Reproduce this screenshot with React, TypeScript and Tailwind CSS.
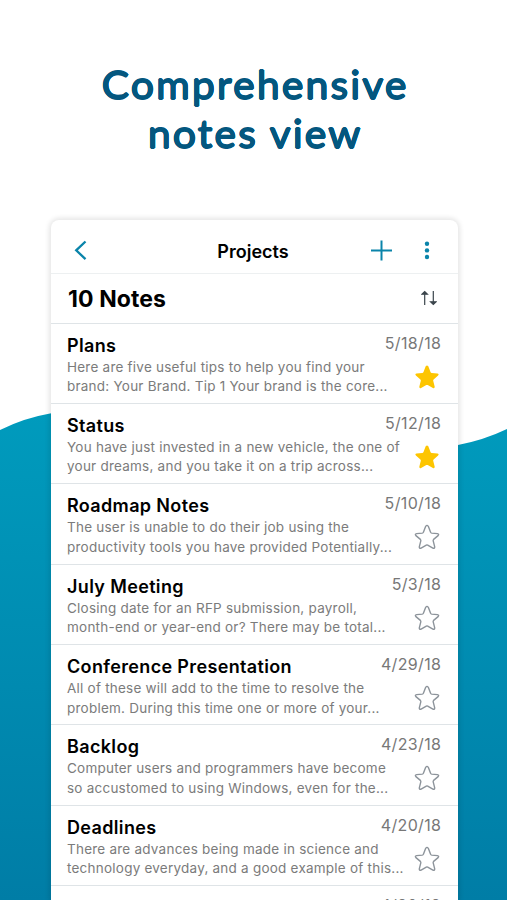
import React from "react";

const notes = [
  {
    title: "Plans",
    date: "5/18/18",
    lines: ["Here are five useful tips to help you find your", "brand: Your Brand. Tip 1 Your brand is the core..."],
    starred: true,
  },
  {
    title: "Status",
    date: "5/12/18",
    lines: ["You have just invested in a new vehicle, the one of", "your dreams, and you take it on a trip across..."],
    starred: true,
  },
  {
    title: "Roadmap Notes",
    date: "5/10/18",
    lines: ["The user is unable to do their job using the", "productivity tools you have provided Potentially..."],
    starred: false,
  },
  {
    title: "July Meeting",
    date: "5/3/18",
    lines: ["Closing date for an RFP submission, payroll,", "month-end or year-end or? There may be total..."],
    starred: false,
  },
  {
    title: "Conference Presentation",
    date: "4/29/18",
    lines: ["All of these will add to the time to resolve the", "problem. During this time one or more of your..."],
    starred: false,
  },
  {
    title: "Backlog",
    date: "4/23/18",
    lines: ["Computer users and programmers have become", "so accustomed to using Windows, even for the..."],
    starred: false,
  },
  {
    title: "Deadlines",
    date: "4/20/18",
    lines: ["There are advances being made in science and", "technology everyday, and a good example of this..."],
    starred: false,
  },
];

const Star = ({ filled }: { filled: boolean }) => (
  <svg width="26" height="26" viewBox="0 0 26 26" className="block">
    <path
      d="M11.7 2.3Q13 .5 14.3 2.3L16.6 8.3Q16.9 9 17.7 9.1L23.4 9.6Q25.4 10 24.1 11.6L19.6 15.4Q19 16 19.2 16.8L20.7 22.8Q20.8 24.8 18.9 24.1L13.7 21.1Q13 20.7 12.3 21.1L7.1 24.1Q5.2 24.8 5.3 22.8L6.8 16.8Q7 16 6.4 15.4L1.9 11.6Q.6 10 2.6 9.6L8.3 9.1Q9.1 9 9.4 8.3Z"
      fill={filled ? "#fdc500" : "none"}
      stroke={filled ? "none" : "#8d949b"}
      strokeWidth="1.4"
      strokeLinejoin="round"
    />
  </svg>
);

const Waves = () => (
  <svg className="absolute inset-0" width="507" height="900" viewBox="0 0 507 900">
    <defs>
      <linearGradient id="sea" x1="0" y1="410" x2="0" y2="900" gradientUnits="userSpaceOnUse">
        <stop offset="0" stopColor="#009bbd" />
        <stop offset="1" stopColor="#007da6" />
      </linearGradient>
    </defs>
    <path d="M0 430Q24 418 50 413.5C190 385 320 465 458 445Q484 440 507 429V900H0Z" fill="url(#sea)" />
  </svg>
);

const App = () => {
  return (
    <div className="relative h-[900px] w-[507px] overflow-hidden bg-white font-['Inter',sans-serif]">
      <Waves />
      <main className="relative flex flex-col items-center">
        {/* the shadows thicken the regular weight and round its stroke ends */}
        <h1 className="ml-[2px] flex h-[220px] shrink-0 scale-x-[1.05] flex-col items-center pt-[60px] font-['Lato',sans-serif] text-[39px] leading-[49px] font-normal text-[#04577f] [text-shadow:0.6px_0_#04577f,-0.6px_0_#04577f,0_0.6px_#04577f,0_-0.6px_#04577f,0.4px_0.4px_#04577f,-0.4px_0.4px_#04577f,0.4px_-0.4px_#04577f,-0.4px_-0.4px_#04577f]">
          <span className="mr-[-2px] tracking-[2px]">Comprehensive</span>
          <span className="mr-[-2px] tracking-[2px]">notes view</span>
        </h1>

        <section className="ml-[2px] h-[680px] w-[407px] overflow-hidden rounded-t-[8px] bg-white shadow-[0_0_5px_2px_rgba(0,0,0,0.1)]">
          <header className="relative flex h-[54px] items-center justify-between border-b border-[#edf0f1] pt-[7px] pr-[28px] pl-[22.5px]">
            <svg width="14" height="20" viewBox="0 0 14 20" fill="none" stroke="#0a84aa" strokeWidth="2.3">
              <path d="M11.5 1.5L2.2 10.3L11.5 19.1" />
            </svg>
            <h2 className="absolute inset-x-0 top-[20px] mr-[3px] text-center text-[18px] leading-6 font-semibold text-black">Projects</h2>
            <div className="flex items-center gap-[32px]">
              <svg width="22" height="22" viewBox="0 0 22 22" stroke="#0a84aa" strokeWidth="2">
                <path d="M11.5 1.5V21.5M1 11.5H22" />
              </svg>
              <svg width="6" height="20" viewBox="0 0 6 20" fill="#0a84aa">
                <circle cx="3" cy="3.8" r="2.2" />
                <circle cx="3" cy="10.4" r="2.2" />
                <circle cx="3" cy="17" r="2.2" />
              </svg>
            </div>
          </header>

          <div className="flex h-[49.5px] items-center justify-between border-b border-[#dfe4e7] pr-[21px] pl-[17px]">
            <h3 className="pt-[2px] text-[23px] leading-7 font-bold tracking-[0.1px] text-black">10 Notes</h3>
            <svg width="16" height="16" viewBox="0 0 16 16" fill="none" stroke="#3b454c" strokeWidth="1.2">
              <path d="M3.7 15V3M12.3 1V13" />
              <path d="M1 4.2L3.7 1.5L6.4 4.2ZM9.6 11.8L12.3 14.5L15 11.8Z" fill="#3b454c" />
            </svg>
          </div>

          <ul>
            {notes.map((note) => (
              <li key={note.title} className="flex h-[80.4px] justify-between border-b border-[#dfe4e7] pr-[17px] pl-[16px]">
                <div className="pt-[10px] whitespace-nowrap">
                  <h4 className="text-[18px] leading-6 font-semibold tracking-[0.35px] text-black">{note.title}</h4>
                  {note.lines.map((line) => (
                    <p key={line} className="text-[13.5px] leading-[19.5px] tracking-[0.23px] text-[#7b7b7b]">
                      {line}
                    </p>
                  ))}
                </div>
                <div className="flex w-0 flex-col items-end pt-[7px]">
                  <span className="-mr-[0.3px] text-[16px] leading-6 tracking-[0.35px] text-[#777]">{note.date}</span>
                  <div className="mt-[9px] mr-px">
                    <Star filled={note.starred} />
                  </div>
                </div>
              </li>
            ))}
            <li className="flex justify-end pt-[7px] pr-[17px] text-[16px] leading-6 tracking-[0.35px] text-[#777]">4/20/18</li>
          </ul>
        </section>
      </main>
    </div>
  );
};

export default App;
